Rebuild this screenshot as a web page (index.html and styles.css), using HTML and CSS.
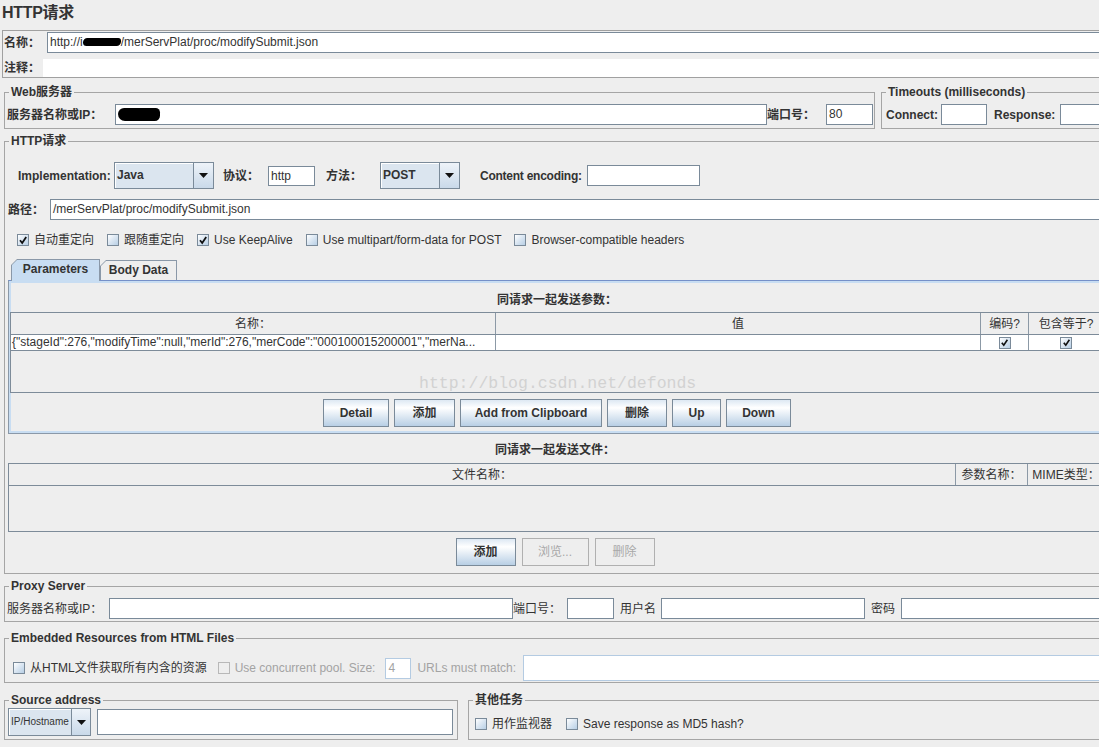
FILE: index.html
```html
<!DOCTYPE html>
<html lang="zh">
<head>
<meta charset="utf-8">
<title>HTTP请求</title>
<link rel="stylesheet" href="styles.css">
</head>
<body>
<div class="page">
  <h1 class="title">HTTP请求</h1>

  <div class="namepanel">
    <div class="np-row np-name">
      <span class="b np-label1">名称：</span>
      <div class="field grow">http://i<span class="blot blot-a"></span>/merServPlat/proc/modifySubmit.json</div>
    </div>
    <div class="np-row np-comment">
      <span class="b np-label2">注释：</span>
      <div class="comment grow"></div>
    </div>
  </div>

  <div class="top-groups">
    <fieldset class="group g-web">
      <legend>Web服务器</legend>
      <div class="row web-row">
        <span class="b w-lab">服务器名称或IP：</span>
        <div class="field grow"><span class="blot blot-b"></span></div>
        <span class="b w-port">端口号：</span>
        <div class="field w-portf">80</div>
      </div>
    </fieldset>
    <fieldset class="group g-timeouts">
      <legend>Timeouts (milliseconds)</legend>
      <div class="row to-row">
        <span class="b t-conn">Connect:</span>
        <div class="field t-connf"></div>
        <span class="b t-resp">Response:</span>
        <div class="field grow"></div>
      </div>
    </fieldset>
  </div>

  <fieldset class="group g-http">
    <legend>HTTP请求</legend>
    <div class="row impl-row">
      <span class="b lab-impl">Implementation:</span>
      <div class="combo c-java"><span class="cv">Java</span><span class="carr"><svg width="9" height="5" viewBox="0 0 9 5"><path d="M0 0H9L4.5 5Z" fill="#111"/></svg></span></div>
      <span class="b lab-proto">协议：</span>
      <div class="field f-proto">http</div>
      <span class="b lab-method">方法：</span>
      <div class="combo c-post"><span class="cv">POST</span><span class="carr"><svg width="9" height="5" viewBox="0 0 9 5"><path d="M0 0H9L4.5 5Z" fill="#111"/></svg></span></div>
      <span class="b lab-enc">Content encoding:</span>
      <div class="field f-enc"></div>
    </div>

    <div class="row path-row">
      <span class="b lab-path">路径：</span>
      <div class="field grow">/merServPlat/proc/modifySubmit.json</div>
    </div>

    <div class="row chk-row">
      <label class="chk"><span class="cb on"><svg width="10" height="10" viewBox="0 0 10 10"><path d="M2 5.2L4.2 8L8.2 2" fill="none" stroke="#111" stroke-width="1.8"/></svg></span>自动重定向</label>
      <label class="chk"><span class="cb"></span>跟随重定向</label>
      <label class="chk"><span class="cb on"><svg width="10" height="10" viewBox="0 0 10 10"><path d="M2 5.2L4.2 8L8.2 2" fill="none" stroke="#111" stroke-width="1.8"/></svg></span>Use KeepAlive</label>
      <label class="chk"><span class="cb"></span>Use multipart/form-data for POST</label>
      <label class="chk"><span class="cb"></span>Browser-compatible headers</label>
    </div>

    <div class="tabs">
      <div class="tab sel"><div class="tab-in">Parameters</div></div>
      <div class="tab"><div class="tab-in">Body Data</div></div>
    </div>
    <div class="tabpanel">
      <div class="ptitle b">同请求一起发送参数：</div>
      <div class="ptable">
        <div class="trow thead">
          <div class="th c1">名称：</div>
          <div class="th c2">值</div>
          <div class="th c3">编码?</div>
          <div class="th c4">包含等于?</div>
        </div>
        <div class="trow tdata">
          <div class="td c1 txt">{"stageId":276,"modifyTime":null,"merId":276,"merCode":"000100015200001","merNa...</div>
          <div class="td c2"></div>
          <div class="td c3"><span class="cb sm on"><svg width="9" height="9" viewBox="0 0 10 10"><path d="M2 5.2L4.2 8L8.2 2" fill="none" stroke="#111" stroke-width="1.8"/></svg></span></div>
          <div class="td c4"><span class="cb sm on"><svg width="9" height="9" viewBox="0 0 10 10"><path d="M2 5.2L4.2 8L8.2 2" fill="none" stroke="#111" stroke-width="1.8"/></svg></span></div>
        </div>
      </div>
      <div class="btnrow">
        <div class="btn w-detail">Detail</div>
        <div class="btn w-add">添加</div>
        <div class="btn w-clip">Add from Clipboard</div>
        <div class="btn w-del">删除</div>
        <div class="btn w-up">Up</div>
        <div class="btn w-down">Down</div>
      </div>
      <div class="watermark">http://blog.csdn.net/defonds</div>
    </div>

    <div class="ftitle b">同请求一起发送文件：</div>
    <div class="ftable">
      <div class="trow thead">
        <div class="th f1">文件名称：</div>
        <div class="th f2">参数名称：</div>
        <div class="th f3">MIME类型：</div>
      </div>
    </div>
    <div class="btnrow fbtns">
      <div class="btn w-fadd">添加</div>
      <div class="btn dis w-browse">浏览...</div>
      <div class="btn dis w-fdel">删除</div>
    </div>
  </fieldset>

  <fieldset class="group g-proxy">
    <legend>Proxy Server</legend>
    <div class="row proxy-row">
      <span class="p-lab">服务器名称或IP：</span>
      <div class="field p-host"></div>
      <span class="p-portl">端口号：</span>
      <div class="field p-port"></div>
      <span class="p-user">用户名</span>
      <div class="field p-userf"></div>
      <span class="p-pass">密码</span>
      <div class="field grow"></div>
    </div>
  </fieldset>

  <fieldset class="group g-emb">
    <legend>Embedded Resources from HTML Files</legend>
    <div class="row emb-row">
      <label class="chk e1"><span class="cb"></span>从HTML文件获取所有内含的资源</label>
      <label class="chk dis-t"><span class="cb dis"></span>Use concurrent pool. Size:</label>
      <div class="field light e-size">4</div>
      <span class="dis-t e-urls">URLs must match:</span>
      <div class="field light grow e-urlf"></div>
    </div>
  </fieldset>

  <div class="bottom-groups">
    <fieldset class="group g-src">
      <legend>Source address</legend>
      <div class="row src-row">
        <div class="combo c-ip"><span class="cv">IP/Hostname</span><span class="carr"><svg width="9" height="5" viewBox="0 0 9 5"><path d="M0 0H9L4.5 5Z" fill="#111"/></svg></span></div>
        <div class="field grow s-field"></div>
      </div>
    </fieldset>
    <fieldset class="group g-other">
      <legend>其他任务</legend>
      <div class="row other-row">
        <label class="chk o1"><span class="cb"></span>用作监视器</label>
        <label class="chk"><span class="cb"></span>Save response as MD5 hash?</label>
      </div>
    </fieldset>
  </div>
</div>
</body>
</html>
```
FILE: styles.css
```css
* { box-sizing: border-box; }
html, body { margin: 0; padding: 0; }
body {
  width: 1099px;
  height: 747px;
  overflow: hidden;
  background: #eeeeee;
  color: #333333;
  font-family: "Liberation Sans", Arial, "Noto Sans CJK SC", sans-serif;
  font-size: 12px;
  line-height: 14px;
}
.page { width: 1106px; padding-left: 2px; }
.b { font-weight: bold; }
.row { display: flex; align-items: center; }
.grow { flex: 1 1 auto; min-width: 0; }

.title {
  margin: 0;
  height: 30px;
  font-size: 16px;
  line-height: 26px;
  font-weight: bold;
  letter-spacing: -0.3px;
}

/* generic text field */
.field {
  flex: 0 0 auto;
  height: 21px;
  background: #ffffff;
  border: 1px solid #7a8a99;
  padding: 0 2px;
  line-height: 19px;
  white-space: nowrap;
  overflow: hidden;
}
.field.grow { flex: 1 1 auto; }
.field.light { border-color: #b4cbe2; }

.blot {
  display: inline-block;
  background: #000;
  vertical-align: middle;
}
.blot-a { width: 38px; height: 8px; border-radius: 5px 3px 5px 4px; margin-top: -2px; }
.blot-b { width: 42px; height: 13px; border-radius: 7px 5px 6px 8px; margin-top: -1px; }

/* name panel */
.namepanel {
  height: 48px;
  border: 1px solid #a0a0a0;
  padding: 1px 0 0 1px;
}
.np-row { display: flex; align-items: center; }
.np-name { height: 21px; }
.np-label1 { width: 43px; flex: 0 0 auto; }
.np-comment { height: 18px; margin-top: 6px; }
.np-label2 { width: 39px; flex: 0 0 auto; }
.comment { height: 18px; background: #ffffff; }

/* titled groups */
fieldset.group {
  margin: 0;
  padding: 0;
  border: 1px solid #a5a5a5;
  min-width: 0;
}
fieldset.group > legend {
  padding: 0 2px;
  margin-left: 4px;
  font-size: 12px;
  line-height: 14px;
  font-weight: bold;
  color: #333333;
}

.top-groups { display: flex; margin-top: 7px; }
.g-web { width: 871px; margin-left: 2px !important; padding: 5px 0 3px 0 !important; }
.g-timeouts { flex: 1 1 auto; margin-left: 6px !important; padding: 5px 0 3px 0 !important; }
.web-row { height: 21px; margin: 0 1px 0 2px; }
.w-lab { width: 108px; flex: 0 0 auto; white-space: nowrap; }
.w-port { width: 59px; flex: 0 0 auto; white-space: nowrap; }
.w-portf { width: 47px; }
.to-row { height: 21px; margin-left: 4px; }
.t-conn { width: 55px; flex: 0 0 auto; }
.t-connf { width: 46px; }
.t-resp { width: 66px; flex: 0 0 auto; margin-left: 7px; }

/* HTTP request group */
.g-http { margin: 5px 0 0 2px !important; padding: 14px 0 7px 0 !important; }
.impl-row { height: 27px; margin-left: 13px; }
.lab-impl { width: 96px; flex: 0 0 auto; white-space: nowrap; }
.lab-proto { width: 45px; margin-left: 9px; flex: 0 0 auto; }
.lab-method { width: 54px; margin-left: 11px; flex: 0 0 auto; }
.lab-enc { width: 107px; margin-left: 20px; flex: 0 0 auto; white-space: nowrap; letter-spacing: -0.25px; }
.f-proto { width: 47px; height: 20px; line-height: 18px; }
.f-enc { width: 113px; }

.combo {
  display: flex;
  flex: 0 0 auto;
  height: 27px;
  border: 1px solid #7a8a99;
  background: #dbe5ef;
  box-shadow: inset 1px 1px 0 #ffffff;
}
.combo .cv { flex: 1 1 auto; padding-left: 2px; line-height: 25px; font-weight: bold; white-space: nowrap; overflow: hidden; }
.combo .carr {
  width: 20px;
  flex: 0 0 auto;
  border-left: 1px solid #7a8a99;
  background: linear-gradient(#eef3f9, #c9d9e9);
  display: flex;
  align-items: center;
  justify-content: center;
}
.c-java { width: 100px; }
.c-post { width: 80px; }

.path-row { height: 21px; margin-top: 10px; margin-left: 3px; }
.lab-path { width: 42px; flex: 0 0 auto; }

.chk-row { height: 15px; margin-top: 12px; padding-left: 12px; }
.chk { display: flex; align-items: center; gap: 5px; margin-right: 13px; white-space: nowrap; }
.cb {
  width: 12px;
  height: 12px;
  flex: 0 0 auto;
  border: 1px solid #7a8a99;
  background: linear-gradient(135deg, #ffffff 0%, #dde8f3 45%, #b8cfe5 100%);
  display: inline-flex;
  align-items: center;
  justify-content: center;
}
.cb.dis { border-color: #b8b8b8; background: #eeeeee; }
.dis-t { color: #a3a3a3; }

/* tabs */
.tabs { display: flex; align-items: flex-end; height: 21px; margin: 12px 0 0 6px; }
.tab {
  height: 21px;
  padding: 1px 1px 0 1px;
  background: #8a98a8;
  clip-path: polygon(6px 0, 100% 0, 100% 100%, 0 100%, 0 6px);
}
.tab .tab-in {
  height: 100%;
  background: #eeeeee;
  clip-path: polygon(5px 0, 100% 0, 100% 100%, 0 100%, 0 5px);
  font-weight: bold;
  text-align: center;
  line-height: 19px;
}
.tab.sel { width: 89px; height: 22px; margin-bottom: -1px; position: relative; z-index: 1; }
.tab.sel .tab-in { background: #c8ddf2; line-height: 19px; }
.tab:not(.sel) { width: 77px; height: 20px; }

.tabpanel {
  position: relative;
  margin-left: 3px;
  border: 1px solid #8a98a8;
  border-top-color: #7590c8;
  box-shadow: inset 0 2px 0 #c8ddf2, inset 0 -2px 0 #c8ddf2, inset 2px 0 0 #c8ddf2;
  padding: 10px 0 6px 1px;
}
.ptitle { height: 18px; line-height: 18px; text-align: center; }
.ptable {
  margin-top: 3px;
  height: 81px;
  border: 1px solid #7d8b99;
  border-right: 0;
}
.trow { display: flex; }
.thead { height: 22px; border-bottom: 1px solid #7d8b99; background: #eeeeee; }
.th {
  height: 21px;
  line-height: 22px;
  text-align: center;
  border-right: 1px solid #8c99a6;
  white-space: nowrap;
  overflow: hidden;
}
.tdata { height: 16px; border-bottom: 1px solid #7d8b99; background: #ffffff; }
.td {
  height: 15px;
  line-height: 15px;
  border-right: 1px solid #8c99a6;
  white-space: nowrap;
  overflow: hidden;
  display: flex;
  align-items: center;
  justify-content: center;
}
.td.txt { justify-content: flex-start; padding-left: 1px; display: block; }
.c1 { width: 485px; flex: 0 0 auto; }
.c2 { width: 485px; flex: 0 0 auto; }
.c3 { width: 48px; flex: 0 0 auto; }
.c4 { flex: 1 1 auto; }
.cb.sm { width: 12px; height: 12px; }

.btnrow { display: flex; justify-content: center; gap: 5px; margin-top: 6px; height: 28px; }
.btn {
  height: 28px;
  border: 1px solid #7a8a99;
  background: linear-gradient(#dde8f3 0%, #ffffff 30%, #b8cfe5 100%);
  font-weight: bold;
  text-align: center;
  line-height: 26px;
  white-space: nowrap;
}
.btn.dis { border-color: #b0b0b0; background: #eeeeee; color: #a8a8a8; font-weight: normal; }
.w-detail { width: 66px; }
.w-add { width: 61px; }
.w-clip { width: 142px; }
.w-del { width: 60px; }
.w-up { width: 49px; }
.w-down { width: 65px; }

.watermark {
  position: absolute;
  left: 410px;
  top: 93px;
  font-family: "Liberation Mono", "Courier New", monospace;
  font-size: 16.5px;
  line-height: 20px;
  color: #d2d2d2;
  white-space: nowrap;
  pointer-events: none;
}

.ftitle { margin-top: 7px; height: 18px; line-height: 18px; text-align: center; }
.ftable {
  margin: 4px 0 0 3px;
  height: 69px;
  border: 1px solid #7d8b99;
  border-right: 0;
}
.f1 { width: 947px; flex: 0 0 auto; }
.f2 { width: 72px; flex: 0 0 auto; }
.f3 { flex: 1 1 auto; }
.fbtns { gap: 6px; }
.w-fadd { width: 60px; }
.w-browse { width: 67px; }
.w-fdel { width: 60px; }

/* proxy */
.g-proxy { margin: 5px 0 0 2px !important; padding: 5px 0 2px 0 !important; }
.proxy-row { height: 21px; margin-left: 2px; }
.p-lab { width: 102px; flex: 0 0 auto; white-space: nowrap; }
.p-host { width: 404px; }
.p-portl { width: 54px; flex: 0 0 auto; white-space: nowrap; }
.p-port { width: 47px; }
.p-user { width: 41px; margin-left: 6px; flex: 0 0 auto; }
.p-userf { width: 204px; }
.p-pass { width: 30px; margin-left: 6px; flex: 0 0 auto; }

/* embedded */
.g-emb { margin: 9px 0 0 2px !important; padding: 10px 0 1px 0 !important; }
.emb-row { height: 26px; margin-left: 8px; }
.chk.e1 { margin-right: 11px; }
.e-size { width: 26px; height: 21px; margin-left: -3px; color: #a3a3a3; }
.e-urls { width: 106px; margin-left: 6px; flex: 0 0 auto; white-space: nowrap; }
.e-urlf { height: 26px; }

/* bottom */
.bottom-groups { display: flex; margin-top: 10px; }
.g-src { width: 454px; margin-left: 2px !important; padding: 1px 0 3px 0 !important; }
.src-row { height: 28px; margin-left: 3px; margin-right: 4px; }
.c-ip { width: 83px; height: 28px; }
.c-ip .cv { font-size: 10px; font-weight: normal; line-height: 26px; padding-left: 2px; }
.c-ip .carr { width: 19px; }
.s-field { height: 26px; margin-left: 6px; }
.g-other { flex: 1 1 auto; margin-left: 10px !important; padding: 5px 0 3px 0 !important; }
.other-row { height: 24px; padding-left: 6px; }
.chk.o1 { margin-right: 14px; }
```
